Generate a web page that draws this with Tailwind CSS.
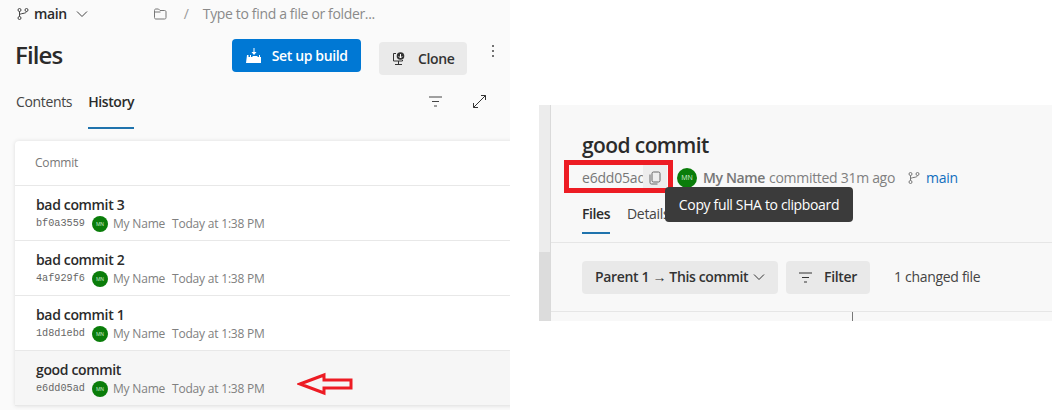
<!DOCTYPE html>
<html lang="en">
<head>
<meta charset="utf-8">
<title>Commit history</title>
<script src="https://cdn.jsdelivr.net/npm/@tailwindcss/browser@4"></script>
</head>
<body class="bg-white">
<div class="relative flex w-[1052px] h-[410px] overflow-hidden bg-white font-['Open_Sans','Noto_Sans',sans-serif] text-[#2b2b2b]">
  <!-- left -->
  <div class="w-[510px] h-[410px] shrink-0 bg-[#fafafa] overflow-hidden">
    <div class="flex items-center h-[27px] pl-[17px] text-sm">
      <svg class="w-3 h-3 text-[#444]" viewBox="0 0 12 12" fill="none" stroke="currentColor"><circle cx="2.5" cy="2" r="1.5"/><circle cx="9.5" cy="2" r="1.5"/><circle cx="2.5" cy="10" r="1.5"/><path d="M2.5 3.5v5M9.5 3.5c0 2.5-7 1.5-7 3.5"/></svg>
      <span class="ml-[5px] font-semibold tracking-[-0.4px]">main</span>
      <svg class="ml-[9px] w-3 h-3 text-[#444]" viewBox="0 0 12 12" fill="none" stroke="currentColor"><path d="M1 3.5l5 5 5-5"/></svg>
      <svg class="ml-[65px] w-[14px] h-3 text-[#777]" viewBox="0 0 14 12" fill="none" stroke="currentColor"><path d="M1.5 2.5c0-1 .5-1.500 1.500-1.500h2.500l1.500 1.500h4.500c1 0 1.500.5 1.500 1.500v5.500c0 1-.5 1.500-1.500 1.500h-8.500c-1 0-1.500-.5-1.500-1.500zM1.500 4h6"/></svg>
      <span class="ml-[17px] text-[#999]">/</span>
      <span class="ml-[14px] text-[#8a8a8a] tracking-[-0.35px]">Type to find a file or folder...</span>
    </div>
    <div class="flex h-[60px] pl-[15px]">
      <h1 class="mt-[9px] text-2xl font-semibold tracking-[-0.9px] leading-[38px]">Files</h1>
      <button class="ml-[170px] mt-[12px] flex items-center justify-center gap-[10px] w-[129px] h-[33px] rounded-sm bg-[#0078d4] text-white text-sm font-semibold tracking-[-0.35px]">
        <svg class="w-4 h-4" viewBox="0 0 16 16" fill="currentColor"><path d="M7.500 0h1v4h2l-2.500 3-2.500-3h2zM1 7h1.500v2h1.500v-2h1v2h1.500v-1h5v1h1.500v-2h1v2h1v6h-15z"/></svg>
        <span>Set up build</span>
      </button>
      <button class="ml-[18px] mt-[15px] flex items-center justify-center gap-[12px] w-[88px] h-[33px] rounded-sm bg-[#eaeaea] text-sm font-semibold tracking-[-0.35px] text-[#333]">
        <svg class="w-[14px] h-[14px]" viewBox="0 0 14 14" fill="none" stroke="currentColor"><path d="M4 1.500h-2.500v7.500h9v-1M6.500 9v3M3 12.500h7"/><circle cx="8.500" cy="4" r="3.800" fill="currentColor" stroke="none"/><path d="M8.500 2v4M6.800 4.300l1.700 1.700 1.700-1.700" stroke="#fff"/></svg>
        <span>Clone</span>
      </button>
      <div class="ml-[25px] mt-[16px] flex flex-col justify-center gap-[3px] h-[16px]">
        <i class="block size-[2px] rounded-full bg-[#444]"></i><i class="block size-[2px] rounded-full bg-[#444]"></i><i class="block size-[2px] rounded-full bg-[#444]"></i>
      </div>
    </div>
    <div class="flex h-[54px] pl-4 text-sm">
      <div class="mt-[4px] leading-[22px] text-[#444] tracking-[-0.35px]">Contents</div>
      <div class="ml-[16px] mt-[4px] h-[38px] w-[46px] border-b-2 border-[#1f73ad] leading-[22px] font-semibold tracking-[-0.4px]">History</div>
      <svg class="ml-[295px] mt-[9px] w-[13px] h-[11px] text-[#444]" viewBox="0 0 13 11" fill="none" stroke="currentColor"><path d="M0 1h13M3 5.500h7M5 10h3"/></svg>
      <svg class="ml-[31px] mt-[8px] w-[13px] h-[13px] text-[#333]" viewBox="0 0 13 13" fill="none" stroke="currentColor"><path d="M.5 12.500l12-12M8 .5h4.500v4.500M.5 8v4.500h4.500"/></svg>
    </div>
    <div class="ml-[15px] w-[520px] bg-white rounded-t shadow-[0_0_4px_rgba(0,0,0,0.12)]">
      <div class="h-[45px] pl-5 flex items-center text-xs text-[#777] border-b border-[#e8e8e8]"><span class="tracking-[-0.2px]">Commit</span></div>
      <div class="h-[55px] pl-[21px] pt-[9px] border-b border-[#e8e8e8]">
        <div class="text-sm font-semibold leading-[20px] tracking-[-0.35px]">bad commit 3</div>
        <div class="flex items-center h-[18px] text-xs text-[#808080] tracking-[-0.2px]"><span class="w-[49px] font-['Liberation_Mono',monospace] text-[10.200px] text-[#666] tracking-normal">bf0a3559</span><span class="ml-[7px] size-4 rounded-full bg-[#0a7d0a] text-[5px] text-[#cfe8cf] flex items-center justify-center">MN</span><span class="ml-[5px] w-[59px]">My Name</span><span>Today at 1:38 PM</span></div>
      </div>
      <div class="h-[55px] pl-[21px] pt-[9px] border-b border-[#e8e8e8]">
        <div class="text-sm font-semibold leading-[20px] tracking-[-0.35px]">bad commit 2</div>
        <div class="flex items-center h-[18px] text-xs text-[#808080] tracking-[-0.2px]"><span class="w-[49px] font-['Liberation_Mono',monospace] text-[10.200px] text-[#666] tracking-normal">4af929f6</span><span class="ml-[7px] size-4 rounded-full bg-[#0a7d0a] text-[5px] text-[#cfe8cf] flex items-center justify-center">MN</span><span class="ml-[5px] w-[59px]">My Name</span><span>Today at 1:38 PM</span></div>
      </div>
      <div class="h-[55px] pl-[21px] pt-[9px] border-b border-[#e8e8e8]">
        <div class="text-sm font-semibold leading-[20px] tracking-[-0.35px]">bad commit 1</div>
        <div class="flex items-center h-[18px] text-xs text-[#808080] tracking-[-0.2px]"><span class="w-[49px] font-['Liberation_Mono',monospace] text-[10.200px] text-[#666] tracking-normal">1d8d1ebd</span><span class="ml-[7px] size-4 rounded-full bg-[#0a7d0a] text-[5px] text-[#cfe8cf] flex items-center justify-center">MN</span><span class="ml-[5px] w-[59px]">My Name</span><span>Today at 1:38 PM</span></div>
      </div>
      <div class="h-[55px] pl-[21px] pt-[9px] bg-[#f6f6f6] border-b border-[#e8e8e8]">
        <div class="text-sm font-semibold leading-[20px] tracking-[-0.35px]">good commit</div>
        <div class="flex items-center h-[18px] text-xs text-[#808080] tracking-[-0.2px]"><span class="w-[49px] font-['Liberation_Mono',monospace] text-[10.200px] text-[#666] tracking-normal">e6dd05ad</span><span class="ml-[7px] size-4 rounded-full bg-[#0a7d0a] text-[5px] text-[#cfe8cf] flex items-center justify-center">MN</span><span class="ml-[5px] w-[59px]">My Name</span><span>Today at 1:38 PM</span></div>
      </div>
    </div>
  </div>
  <!-- right -->
  <div class="ml-[29px] mt-[105px] w-[513px] h-[216px] flex bg-[#f8f8f8] overflow-hidden">
    <div class="w-[11px] shrink-0 flex flex-col bg-[#ececec]"><div class="mt-[147px] flex-1 bg-[#dcdcdc]"></div></div>
    <div class="flex-1 min-w-0 border-l border-[#dadada]">
      <div class="pl-[31px] pt-[25px] h-[138px] border-b border-[#e6e6e6]">
        <h2 class="text-[21px] font-semibold leading-[30px] tracking-[-0.6px]">good commit</h2>
        <div class="flex items-center h-[28px] mt-[4px] text-sm">
          <span class="w-[61px] text-[#777] tracking-[-0.2px]">e6dd05ad</span>
          <span class="w-6 h-[28px] flex items-center justify-center bg-[#ededed]">
            <svg class="w-3 h-[14px] text-[#666]" viewBox="0 0 12 14" fill="none" stroke="currentColor"><rect x="3" y="1" width="8" height="10" rx="1.500"/><path d="M1 3.500v8c0 1 .5 1.500 1.500 1.500h6"/></svg>
          </span>
          <span class="ml-[10px] size-5 shrink-0 rounded-full bg-[#0a7d0a] text-[7px] text-[#d8edd8] flex items-center justify-center">MN</span>
          <span class="ml-[6px] font-semibold text-[#777] tracking-[-0.35px]">My Name</span>
          <span class="ml-[4px] text-[#808080] tracking-[-0.3px]">committed 31m ago</span>
          <svg class="ml-[13px] w-3 h-3 text-[#777]" viewBox="0 0 12 12" fill="none" stroke="currentColor"><circle cx="2.500" cy="2" r="1.500"/><circle cx="9.500" cy="2" r="1.500"/><circle cx="2.500" cy="10" r="1.500"/><path d="M2.500 3.500v5M9.500 3.500c0 2.500-7 1.500-7 3.500"/></svg>
          <span class="ml-[6px] text-[#106ebe] tracking-[-0.3px]">main</span>
        </div>
        <div class="flex mt-[12px] text-sm">
          <div class="h-[30px] w-7 border-b-2 border-[#1f73ad] font-semibold leading-[20px] tracking-[-0.4px]">Files</div>
          <div class="ml-[17px] text-[#444] leading-[20px] tracking-[-0.3px]">Details</div>
        </div>
      </div>
      <div class="flex items-center h-[69px] pl-[31px] text-sm border-b border-[#e6e6e6]">
        <button class="flex items-center justify-between w-[196px] h-[33px] px-[13px] rounded-sm bg-[#e9e9e9] font-semibold tracking-[-0.35px] text-[#333]"><span>Parent 1 → This commit</span><svg class="w-3 h-3" viewBox="0 0 12 12" fill="none" stroke="currentColor"><path d="M1 3.500l5 5 5-5"/></svg></button>
        <button class="ml-2 flex items-center justify-center gap-[12px] w-[84px] h-[33px] rounded-sm bg-[#e9e9e9] font-semibold tracking-[-0.35px] text-[#333]"><svg class="w-[13px] h-[11px]" viewBox="0 0 13 11" fill="none" stroke="currentColor"><path d="M0 1h13M3 5.500h7M5 10h3"/></svg><span>Filter</span></button>
        <span class="ml-[24px] text-[#444] tracking-[-0.3px]">1 changed file</span>
      </div>
      <div class="ml-[301px] w-px h-[9px] bg-[#777]"></div>
    </div>
  </div>
  <!-- overlays -->
  <div class="absolute left-[564px] top-[160px] w-[109px] h-[33px] border-[5px] border-[#ed1c24]"></div>
  <div class="absolute left-[665px] top-[187px] w-[188px] h-[35px] rounded-sm bg-[#3b3b3b] text-white text-sm flex items-center justify-center tracking-[-0.35px]">Copy full SHA to clipboard</div>
  <svg class="absolute left-[297px] top-[372px] w-[58px] h-[24px]" viewBox="0 0 58 24" fill="none" stroke="#ed1c24" stroke-width="3"><path d="M3 12l24-9v5h27v8h-27v5z"/></svg>
</div>
</body>
</html>
